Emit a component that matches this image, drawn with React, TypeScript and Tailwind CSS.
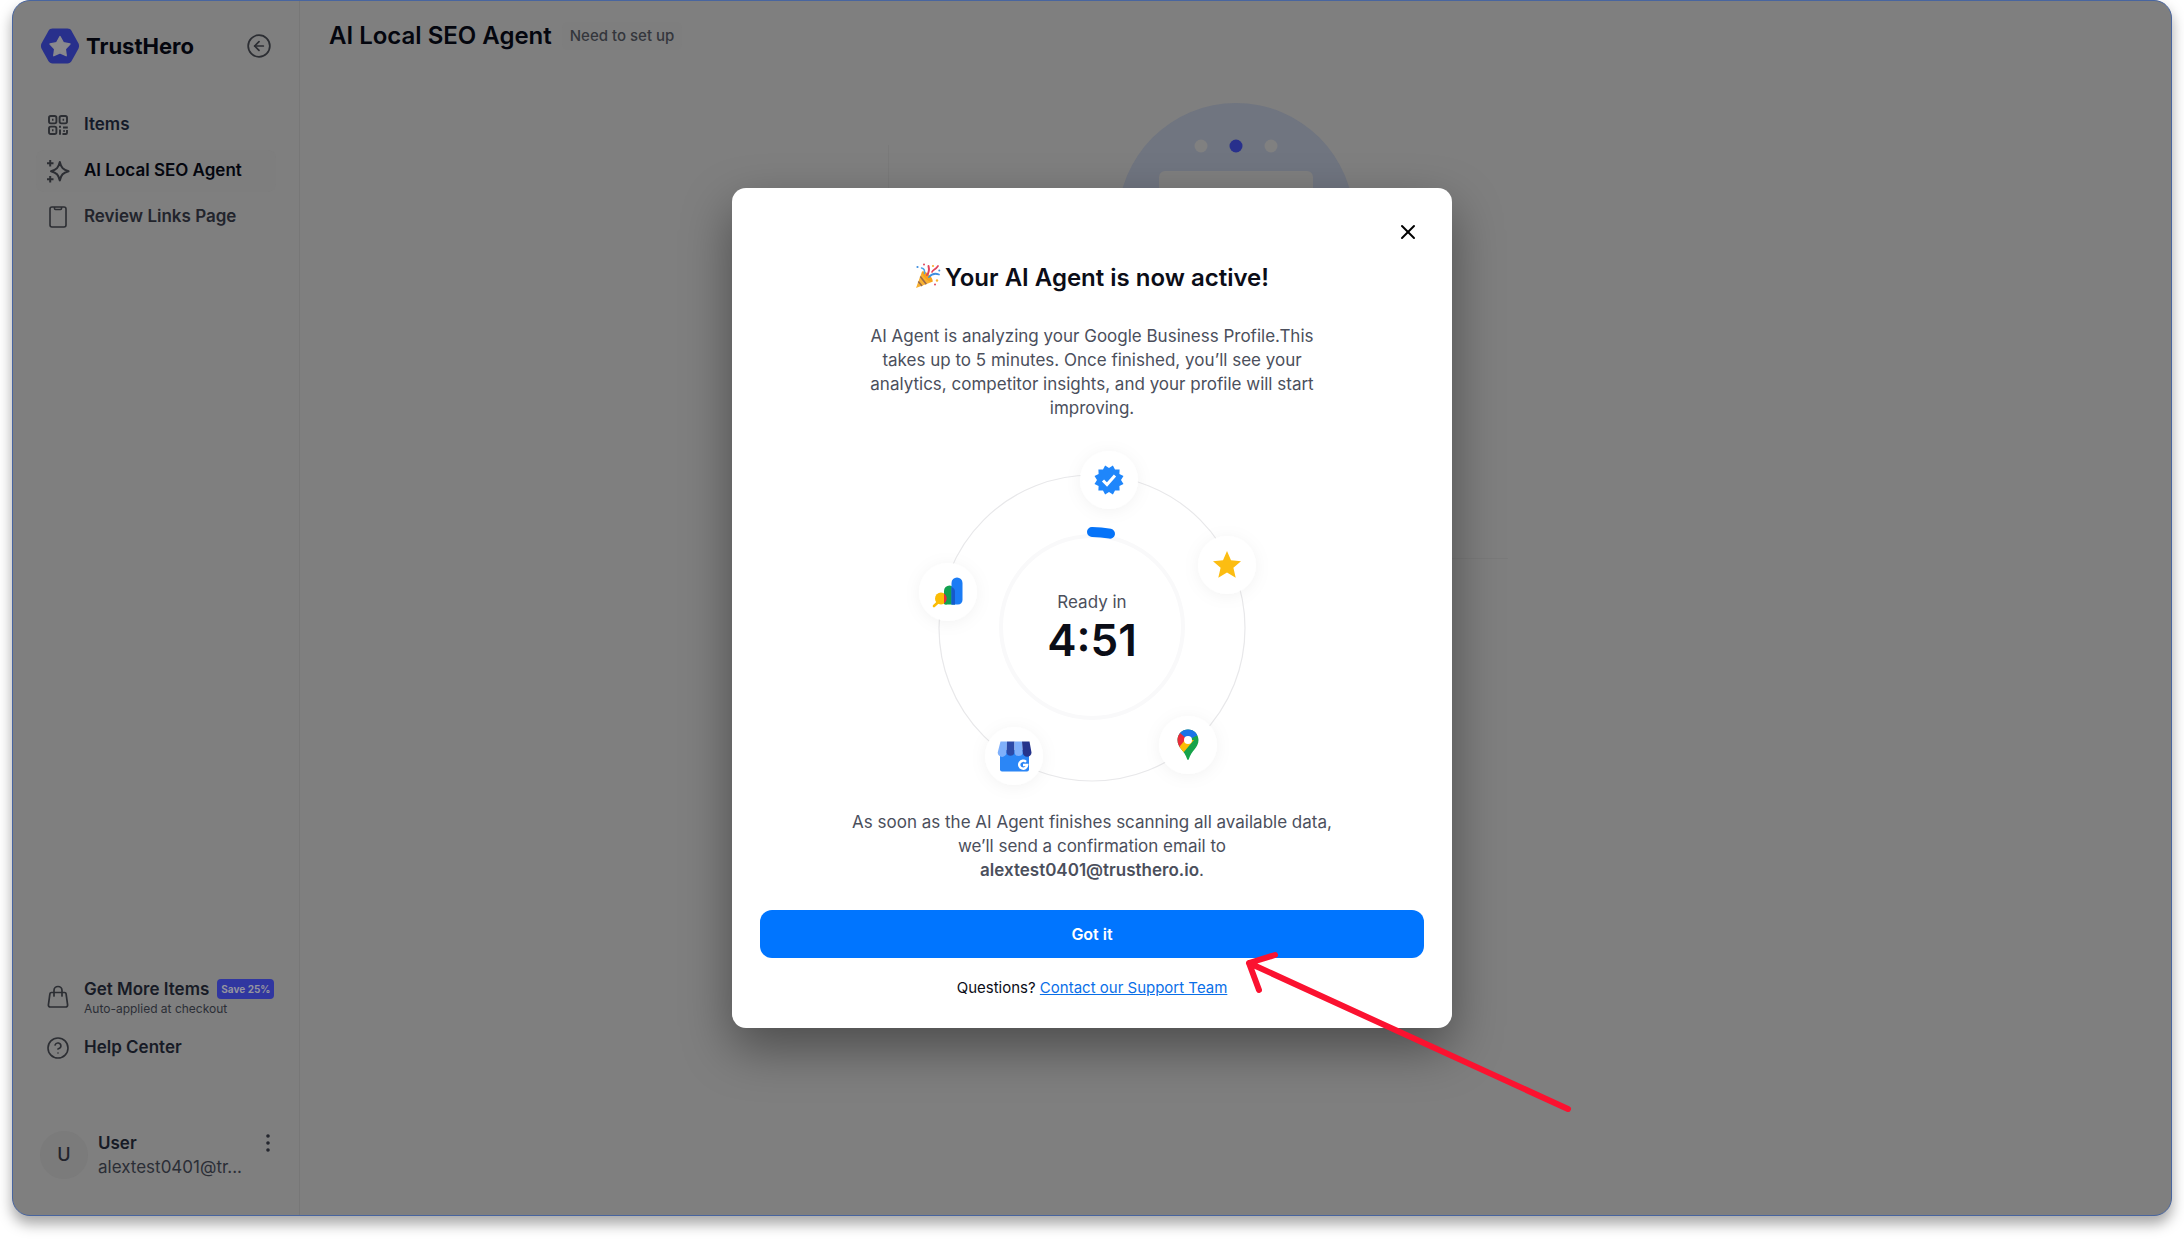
import { CircleArrowLeft, CircleHelp, EllipsisVertical, X } from 'lucide-react'

function Logo() {
  return (
    <svg width="40" height="36" viewBox="0 0 40 36" aria-hidden="true">
      <path d="M12.5 0.5h15c1.8 0 3.2 0.8 4.1 2.4l6.8 12.4c0.9 1.7 0.9 3.7 0 5.4l-6.8 12.4c-0.9 1.6-2.3 2.4-4.1 2.4h-15c-1.8 0-3.2-0.8-4.1-2.4L1.6 20.7c-0.9-1.7-0.9-3.7 0-5.4L8.4 2.9C9.3 1.3 10.7 0.5 12.5 0.5z" fill="#28308c" />
      <path d="M20 8.6l3.3 6 6.7 1.3-4.7 5 0.9 6.8L20 24.8l-6.2 2.9 0.9-6.8-4.7-5 6.7-1.3z" fill="#8a8a8d" stroke="#8a8a8d" strokeWidth="1.4" strokeLinejoin="round" />
    </svg>
  )
}

function ItemsIcon() {
  return (
    <svg width="24" height="24" viewBox="0 0 24 24" fill="none" stroke="#2c2e33" strokeWidth="1.9" aria-hidden="true">
      <rect x="3" y="3" width="7.4" height="7.4" rx="1.8" />
      <rect x="13.6" y="3" width="7.4" height="7.4" rx="1.8" />
      <rect x="3" y="13.6" width="7.4" height="7.4" rx="1.8" />
      <path d="M6 6.7h1.5M16.6 6.7h1.5M6 17.3h1.5M14 21.8v-5.3M13 13.8h2M17 14.5h4.8M17.3 18h1.5M21 17v2.7a1.3 1.3 0 0 1-1.3 1.3H16.5" />
    </svg>
  )
}

function SparkIcon() {
  return (
    <svg width="24" height="24" viewBox="0 0 24 24" fill="none" stroke="#2c2e33" strokeWidth="2" strokeLinejoin="round" aria-hidden="true">
      <path d="M13.8 3c1.3 5.5 3.2 7.7 8.8 9.2-5.6 1.5-7.5 3.7-8.8 9.2-1.3-5.5-3.2-7.7-8.8-9.2 5.6-1.5 7.5-3.7 8.8-9.2z" />
      <path d="M4.2 1v6.5M1 4.2h6.5M4.2 17v6.5M1 20.2h6.5" />
    </svg>
  )
}

function PageIcon() {
  return (
    <svg width="24" height="24" viewBox="0 0 24 24" fill="none" stroke="#2c2e33" strokeWidth="1.6" strokeLinejoin="round" aria-hidden="true">
      <rect x="4" y="2" width="16" height="20" rx="2" />
      <path d="M8.5 2v1.5a1 1 0 0 0 1 1h5a1 1 0 0 0 1-1V2" />
    </svg>
  )
}

function BagIcon() {
  return (
    <svg className="shrink-0" width="24" height="24" viewBox="0 0 24 24" fill="none" stroke="#2c2e33" strokeWidth="1.7" strokeLinecap="round" strokeLinejoin="round" aria-hidden="true">
      <path d="M5.4 7.5h13.2a1.5 1.5 0 0 1 1.5 1.3l1.5 11a1.900 1.900 0 0 1-1.900 2.200H4.300a1.900 1.900 0 0 1-1.900-2.200l1.500-11a1.500 1.500 0 0 1 1.500-1.300z" />
      <path d="M8 11V5.5a4 4 0 0 1 8 0V11" />
    </svg>
  )
}

function PartyIcon() {
  return (
    <svg className="mb-1" width="26" height="26" viewBox="0 0 26 26" fill="none" aria-hidden="true">
      <path d="M1 25L7 8.5c4 1.5 8.5 6 10.5 10.2z" fill="#f9b233" />
      <path d="M5.3 13.5l6 7.7M3.3 18.5l3.8 4.5" stroke="#9a6a4a" strokeWidth="1.6" />
      <ellipse cx="12.3" cy="13.6" rx="2.6" ry="7.2" transform="rotate(-45 12.3 13.6)" fill="#f7a21b" />
      <path d="M12 12c2-2.5 2.5-5 1.5-9" stroke="#e0445c" strokeWidth="2" strokeLinecap="round" />
      <path d="M14 14c3-3.5 6-4 10-2.5" stroke="#3f8fe0" strokeWidth="1.8" strokeLinecap="round" />
      <path d="M9.5 10.5C10 7.5 9 5.5 6.5 5" stroke="#4aa3e8" strokeWidth="1.5" strokeLinecap="round" />
      <path d="M17 9c1-3 3.5-2 6-6" stroke="#e0445c" strokeWidth="1.7" strokeLinecap="round" />
      <circle cx="2.5" cy="4" r="1.1" fill="#3f8fe0" />
      <circle cx="9" cy="1.6" r="1" fill="#e0445c" />
      <circle cx="18" cy="3" r="1.1" fill="#f9b233" />
      <circle cx="22" cy="17.5" r="1.2" fill="#f9b233" />
      <circle cx="24.3" cy="7.5" r="1" fill="#3f8fe0" />
      <circle cx="20" cy="21.5" r="1" fill="#e0445c" />
    </svg>
  )
}

const badgePoints = Array.from({ length: 24 }, (_, i) => {
  const r = i % 2 === 0 ? 15 : 12
  const a = ((i + 1) * Math.PI) / 12
  return `${(r * Math.sin(a)).toFixed(2)},${(-r * Math.cos(a)).toFixed(2)}`
}).join(' ')

// Orbit with the service bubbles, centred on 190,190
function Orbit() {
  return (
    <svg className="block w-full" viewBox="0 0 380 380" fill="none" aria-hidden="true">
      <defs>
        <filter id="soft" x="-50%" y="-50%" width="200%" height="200%">
          <feDropShadow dx="0" dy="2" stdDeviation="8" floodColor="#000" floodOpacity="0.05" />
        </filter>
        <clipPath id="pin">
          <path d="M0-15.5c6 0 10.500 4.700 10.500 10.500C10.500 3 3.500 5 0.800 14.300c-0.300 0.900-1.300 0.900-1.600 0C-3.500 5-10.500 3-10.500-5-10.500-10.800-6-15.500 0-15.500z" />
        </clipPath>
      </defs>
      <circle cx="190" cy="190" r="153" stroke="#e8e8ea" strokeWidth="1.2" />
      <circle cx="190" cy="189" r="91" fill="#fff" stroke="#f9f9fa" strokeWidth="4" />
      <path d="M190 94a95 95 0 0 1 18 1.700" stroke="#0573f8" strokeWidth="10" strokeLinecap="round" />

      <g transform="translate(207 42)">
        <circle r="29" fill="#fff" filter="url(#soft)" />
        <polygon points={badgePoints} fill="#1f86fb" />
        <path d="M-6 0.5l4 4L6-4.5" stroke="#fff" strokeWidth="3" />
      </g>

      <g transform="translate(325 127)">
        <circle r="29" fill="#fff" filter="url(#soft)" />
        <path d="M0-14l4 9.300 10 0.900-7.600 6.600 2.300 10L0 7.500l-8.700 5.300 2.300-10-7.600-6.600 10-0.900z" fill="#fcbd12" />
      </g>

      <g transform="translate(46 154)">
        <circle r="29" fill="#fff" filter="url(#soft)" />
        <g transform="translate(-1 0)">
          <path d="M-13 14l7-6.5" stroke="#fbbc05" strokeWidth="2.6" strokeLinecap="round" />
          <circle cx="-6" cy="6.5" r="6" fill="#fbbc05" />
          <path d="M-3 12V-1a5.500 5.500 0 0 1 11 0v13.500H0a3 3 0 0 1-3-0.500z" fill="#12a150" />
          <path d="M-3 1.500a6 6 0 0 1 0 10z" fill="#ea2a3a" />
          <path d="M4.500-9a5.500 5.500 0 0 1 11 0V8a4.500 4.500 0 0 1-4.500 4.500H4.500z" fill="#1b7cf5" />
          <path d="M4.500-5C7-4 8-2.500 8-0.500v13H4.500z" fill="#1659c9" />
        </g>
      </g>

      <g transform="translate(112 318)">
        <circle r="29" fill="#fff" filter="url(#soft)" />
        <path d="M-14-6h29v19.500a2 2 0 0 1-2 2h-25a2 2 0 0 1-2-2z" fill="#2b86f6" />
        <path d="M-13.500-14.500h6.500l-0.500 11a4.200 4.200 0 0 1-8.800 0z" fill="#7fb0fb" />
        <path d="M-7-14.500H0.500v11a4.100 4.100 0 0 1-8 0z" fill="#2c4aa8" />
        <path d="M0.500-14.500H8l0.800 11a4.200 4.200 0 0 1-8.300 0z" fill="#7fb0fb" />
        <path d="M8-14.500h7.500l2 11a4.300 4.300 0 0 1-8.700 0z" fill="#25348c" />
        <path d="M12 5.800a4 4 0 1 0 1.200 3.200H9" stroke="#fff" strokeWidth="2.4" />
      </g>

      <g transform="translate(286 307)">
        <circle r="29" fill="#fff" filter="url(#soft)" />
        <g clipPath="url(#pin)">
          <rect x="-12" y="-16" width="24" height="32" fill="#16a34a" />
          <path d="M-12-16h24v5L0-5l-12-6z" fill="#1a73e8" />
          <path d="M-8-12l8 7-12 13v-20z" fill="#ea2a3a" />
          <path d="M-12 6L-3-5 6-5-5 8l-7 5z" fill="#fbbc05" />
        </g>
        <circle cy="-5" r="4" fill="#fff" />
      </g>
    </svg>
  )
}

function BackgroundArt() {
  return (
    <svg className="block" width="236" height="236" viewBox="0 0 236 236" aria-hidden="true">
      <circle cx="118" cy="118" r="118" fill="#707580" />
      <circle cx="83" cy="43" r="6.5" fill="#808080" />
      <circle cx="118" cy="43" r="6.5" fill="#28308c" />
      <circle cx="153" cy="43" r="6.5" fill="#808080" />
      <rect x="41" y="68" width="154" height="140" rx="6" fill="#7f7f7f" />
    </svg>
  )
}

const nav = [
  { label: 'Items', icon: ItemsIcon, style: 'text-[#141a29]' },
  { label: 'AI Local SEO Agent', icon: SparkIcon, style: 'bg-[#7e7e7e] text-[#04060e]' },
  { label: 'Review Links Page', icon: PageIcon, style: 'text-[#22242c]' },
]

function Sidebar() {
  return (
    <aside className="flex w-[287px] shrink-0 flex-col border-r border-[#777777] px-[23px] pt-[23px] pb-9">
      <div className="flex h-11 items-center pr-1 pl-1">
        <Logo />
        <span className="ml-1.5 text-[22px] font-bold text-[#04060e]">TrustHero</span>
        <button aria-label="Collapse sidebar" className="ml-auto text-[#2c2e33]">
          <CircleArrowLeft size={26} strokeWidth={1.6} />
        </button>
      </div>

      <nav className="mt-9 flex flex-col gap-1">
        {nav.map(({ label, icon: Icon, style }) => (
          <a key={label} href="#" className={`flex h-[42px] items-center gap-3.5 rounded-lg px-2.5 text-[17px] font-semibold ${style}`}>
            <Icon />
            {label}
          </a>
        ))}
      </nav>

      <div className="mt-auto flex flex-col">
        <a href="#" className="flex h-12 items-center gap-3.5 pl-2.5">
          <BagIcon />
          <span className="flex flex-col">
            <span className="flex items-center gap-2 text-[17px] leading-6 font-semibold whitespace-nowrap text-[#171b26]">
              Get More Items
              <span className="rounded bg-[#3036a0] px-1 text-[10px] leading-5 font-bold text-[#94949f]">Save 25%</span>
            </span>
            <span className="text-xs leading-4 text-[#2b2e36]">Auto-applied at checkout</span>
          </span>
        </a>
        <a href="#" className="mt-1.5 flex h-[42px] items-center gap-3.5 px-2.5 text-[17px] font-semibold text-[#171b26]">
          <CircleHelp size={24} strokeWidth={1.6} className="text-[#2c2e33]" />
          Help Center
        </a>
      </div>

      <div className="mt-[62px] flex items-center pl-1">
        <span className="flex size-12 shrink-0 items-center justify-center rounded-full bg-[#7b7b7b] text-lg font-medium text-[#22242c]">U</span>
        <div className="ml-2.5 flex-1">
          <p className="text-[17px] leading-6 font-semibold text-[#171b26]">User</p>
          <p className="text-[17px] leading-6 text-[#2b2e36]">alextest0401@tr...</p>
        </div>
        <button aria-label="Account menu" className="-mr-1 mb-6 text-[#22242c]">
          <EllipsisVertical size={24} strokeWidth={1.6} />
        </button>
      </div>
    </aside>
  )
}

function Modal() {
  return (
    <div role="dialog" aria-modal="true" aria-labelledby="modal-title" className="relative w-[720px] rounded-[14px] bg-white p-7 text-center shadow-[0_20px_50px_rgba(0,0,0,0.4)]">
      <div className="flex justify-end">
        <button aria-label="Close" className="p-1 text-black">
          <X size={24} strokeWidth={2} />
        </button>
      </div>

      <h2 id="modal-title" className="mt-3.5 flex items-center justify-center gap-1 text-2xl leading-8 font-semibold text-[#0b0d17]">
        <PartyIcon />
        Your AI Agent is now active!
      </h2>

      <p className="mx-auto mt-[30px] w-[470px] text-[17px] leading-6 text-[#4b4f5c]">
        AI Agent is analyzing your Google Business Profile.This takes up to 5 minutes. Once finished, you’ll see your analytics, competitor insights, and your profile will start improving.
      </p>

      <div className="relative mx-auto mt-[18px] w-[380px]">
        <Orbit />
        <div className="absolute inset-0 flex flex-col items-center justify-center">
          <p className="text-[17px] leading-6 text-[#4b4f5c]">Ready in</p>
          <p className="text-[44px] leading-[52px] font-semibold text-[#0b0d17]">4:51</p>
        </div>
      </div>

      <p className="mx-auto -mt-2 w-[500px] text-[17px] leading-6 text-[#4b4f5c]">
        As soon as the AI Agent finishes scanning all available data, we’ll send a confirmation email to
        <br />
        <strong className="font-semibold">alextest0401@trusthero.io</strong>.
      </p>

      <button className="mt-7 h-12 w-full rounded-xl bg-[#0075ff] text-base font-semibold text-white">Got it</button>

      <p className="mt-[18px] text-[15px] leading-6 text-[#0b0d17]">
        Questions? <a href="#" className="text-[#0a6fe8] underline">Contact our Support Team</a>
      </p>

      {/* Callout arrow over the button */}
      <svg className="pointer-events-none absolute top-[760px] left-[510px]" width="334" height="170" viewBox="0 0 334 170" fill="none" stroke="#fb1230" strokeWidth="6" strokeLinecap="round" strokeLinejoin="round" aria-hidden="true">
        <path d="M326 161L7 15M33 7L7 15l10 27" />
      </svg>
    </div>
  )
}

export default function App() {
  return (
    <div className="min-h-screen overflow-hidden bg-white px-3 pb-[25px] font-['Inter',sans-serif]">
      <div className="relative flex min-h-[calc(100vh-25px)] rounded-[18px] border border-[#48659f] bg-[#7f7f7f] shadow-[0_8px_14px_rgba(0,0,0,0.35)]">
        <Sidebar />
        <main className="relative flex-1 px-[29px] pt-[19px]">
          <header className="flex items-center gap-2.5">
            <h1 className="text-2xl leading-8 font-semibold text-[#04060e]">AI Local SEO Agent</h1>
            <span className="rounded-md bg-[#7e7e7e] px-2 text-[15px] leading-7 font-medium text-[#34363c]">Need to set up</span>
          </header>
          <div className="absolute top-[144px] left-[588px] h-[414px] w-[620px] border-b border-l border-[#7a7a7a]" />
          <div className="absolute top-[102px] left-[818px]">
            <BackgroundArt />
          </div>
        </main>
        <div className="absolute inset-0 flex items-center justify-center">
          <Modal />
        </div>
      </div>
    </div>
  )
}
